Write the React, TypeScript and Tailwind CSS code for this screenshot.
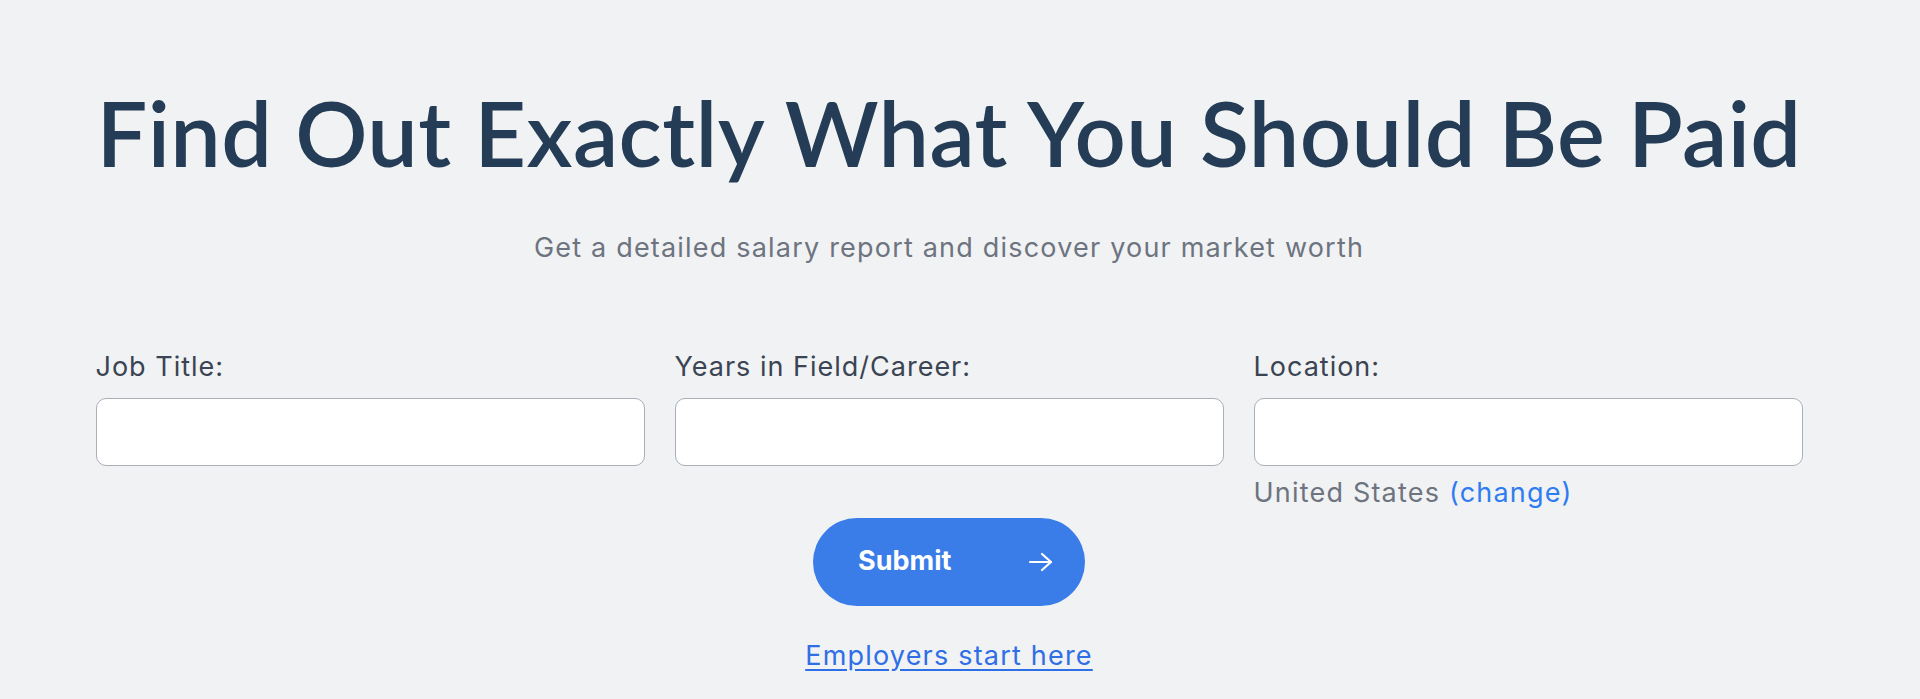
import React, { useState } from 'react';

const ArrowIcon = ({ className }: { className?: string }) => (
  <svg className={className} viewBox="0 0 26 20" fill="none" stroke="currentColor" strokeWidth="2.2" strokeLinecap="round" strokeLinejoin="round">
    <path d="M2 10h21" />
    <path d="M14 2l9 8-9 8" />
  </svg>
);

const Field = ({ label, children }: { label: string; children?: React.ReactNode }) => {
  const [value, setValue] = useState('');
  return (
    <div className="flex flex-col">
      <label className="text-[27px] leading-[32px] tracking-[1px] text-[#3a4452] mb-[14.5px]">{label}</label>
      <input
        type="text"
        value={value}
        onChange={(e) => setValue(e.target.value)}
        className="h-[68px] w-full rounded-[10px] border-[1.5px] border-[#a9b0b8] bg-white px-4 text-[24px] outline-none"
      />
      {children}
    </div>
  );
};

export default function App() {
  return (
    <div className="min-h-screen bg-[#f1f2f4] font-['Inter',sans-serif] pr-[22px]">
      <div className="mx-auto w-[1707px] pt-[80px] flex flex-col items-center">
        <h1 className="whitespace-nowrap font-['Lato',sans-serif] font-semibold text-[90px] leading-[104px] text-[#243c55] tracking-[0.4px]">
          Find Out Exactly What You Should Be Paid
        </h1>
        <p className="mt-[48px] text-[27px] leading-[32px] tracking-[1.2px] text-[#6d7480]">
          Get a detailed salary report and discover your market worth
        </p>

        <div className="mt-[87px] w-full grid grid-cols-3 gap-[30px]">
          <Field label="Job Title:" />
          <Field label="Years in Field/Career:" />
          <Field label="Location:">
            <div className="mt-[11.5px] text-[27px] leading-[32px] tracking-[1.2px] text-[#6d7480]">
              United States <a href="#" className="text-[#2f7cf0]">(change)</a>
            </div>
          </Field>
        </div>

        <button className="mt-[8.5px] h-[88px] w-[272px] rounded-full bg-[#3a7de9] text-white flex items-center justify-between pl-[45px] pr-[31px]">
          <span className="text-[27px] font-bold">Submit</span>
          <ArrowIcon className="w-[26px] h-[20px]" />
        </button>

        <a href="#" className="mt-[34.5px] text-[27px] leading-[32px] tracking-[1.2px] text-[#2f6fe6] underline underline-offset-[4px]">
          Employers start here
        </a>
      </div>
    </div>
  );
}
